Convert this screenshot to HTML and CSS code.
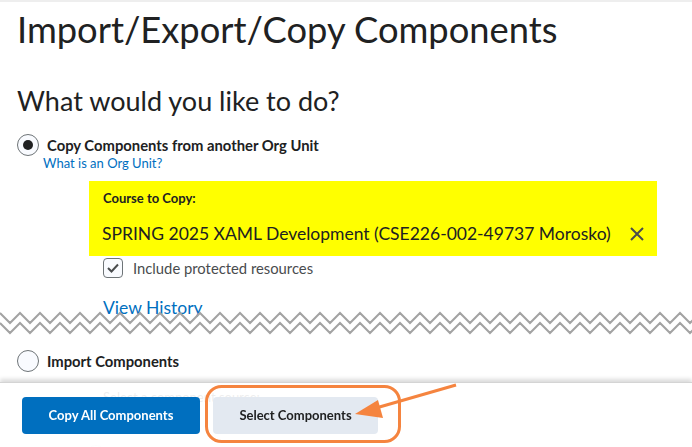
FILE: index.html
```html
<html>
<head>
<title>Import/Export/Copy Components</title>
<link rel="stylesheet" href="styles.css">
</head>
<body>
<div class="topline"></div>
<div id="Content">
  <h1 class="page-title">Import/Export/Copy Components</h1>
  <h2 class="section-title">What would you like to do?</h2>

  <div class="option">
    <span class="radio checked"></span>
    <span class="option-label">Copy Components from another Org Unit</span>
  </div>
  <a class="help-link" href="#">What is an Org Unit?</a>

  <div class="course-box">
    <div class="course-caption">Course to Copy:</div>
    <div class="course-row">
      <span class="course-name">SPRING 2025 XAML Development (CSE226-002-49737 Morosko)</span>
      <svg class="clear-icon" width="14" height="14" viewBox="0 0 14 14"><path d="M1 1 L13 13 M13 1 L1 13" stroke="#494c4e" stroke-width="2" fill="none"/></svg>
    </div>
  </div>

  <div class="check-row">
    <span class="checkbox"><svg width="12" height="10" viewBox="0 0 12 10"><path d="M1 5 L4.5 8.5 L11 1.5" stroke="#494c4e" stroke-width="2" fill="none"/></svg></span>
    <span>Include protected resources</span>
  </div>
  <a class="history-link" href="#">View History</a>

  <!-- torn edge: part of the page is cut out here -->
  <svg class="tear" width="692" height="24" viewBox="0 0 692 24" preserveAspectRatio="none">
    <polyline points="0,0 10,10 20,0 30,10 40,0 50,10 60,0 70,10 80,0 90,10 100,0 110,10 120,0 130,10 140,0 150,10 160,0 170,10 180,0 190,10 200,0 210,10 220,0 230,10 240,0 250,10 260,0 270,10 280,0 290,10 300,0 310,10 320,0 330,10 340,0 350,10 360,0 370,10 380,0 390,10 400,0 410,10 420,0 430,10 440,0 450,10 460,0 470,10 480,0 490,10 500,0 510,10 520,0 530,10 540,0 550,10 560,0 570,10 580,0 590,10 600,0 610,10 620,0 630,10 640,0 650,10 660,0 670,10 680,0 690,10 700,0" transform="translate(0,2)" stroke="#a3a3a3" stroke-width="2" fill="none"/>
    <polyline points="0,0 10,10 20,0 30,10 40,0 50,10 60,0 70,10 80,0 90,10 100,0 110,10 120,0 130,10 140,0 150,10 160,0 170,10 180,0 190,10 200,0 210,10 220,0 230,10 240,0 250,10 260,0 270,10 280,0 290,10 300,0 310,10 320,0 330,10 340,0 350,10 360,0 370,10 380,0 390,10 400,0 410,10 420,0 430,10 440,0 450,10 460,0 470,10 480,0 490,10 500,0 510,10 520,0 530,10 540,0 550,10 560,0 570,10 580,0 590,10 600,0 610,10 620,0 630,10 640,0 650,10 660,0 670,10 680,0 690,10 700,0" transform="translate(0,12)" stroke="#a3a3a3" stroke-width="2" fill="none"/>
  </svg>

  <div class="option import">
    <span class="radio"></span>
    <span class="option-label">Import Components</span>
  </div>
  <div class="source-caption">Select a component source:</div>
  <div class="source-list">
    <span class="radio faint"></span>
  </div>
</div>

<div class="action-bar">
  <button type="button" class="btn primary">Copy All Components</button>
  <button type="button" class="btn secondary">Select Components</button>
</div>

<!-- orange callout drawn over the screenshot -->
<svg class="callout" width="692" height="447" viewBox="0 0 692 447">
  <rect x="206.5" y="386.5" width="193" height="55" rx="15" ry="15" stroke="#f5843f" stroke-width="3" fill="none"/>
  <line x1="456" y1="385" x2="376" y2="408" stroke="#f5843f" stroke-width="3"/>
  <polygon points="355,414 378,400 383,418" fill="#f5843f"/>
</svg>
</body>
</html>
```

FILE: styles.css
```css
body { margin:0; background:#fff; color:#202122; font-family:Lato, "Noto Sans", sans-serif; }
a { color:#006fbf; text-decoration:none; }

.topline { height:2px; background:#eeeeee; }

#Content { padding:0 0 0 17px; }

.page-title { font-size:36.3px; font-weight:400; margin:5px 0 0 0; line-height:44px; color:#202122; }
.section-title { font-size:27px; font-weight:400; margin:34px 0 0 0; line-height:32px; color:#202122; }

.option { display:flex; align-items:center; gap:8px; margin-top:17px; }
.option.import { margin-top:15px; }
.option-label { font-size:14.8px; font-weight:700; color:#202122; }
.radio { width:20px; height:20px; border:1px solid #6e7477; border-radius:50%; background:#f9fbff; display:flex; align-items:center; justify-content:center; }
.radio.checked::after { content:""; width:10px; height:10px; border-radius:50%; background:#202122; }
.radio.faint { border-color:#e6e6e6; background:#fff; }

.help-link { display:block; font-size:13px; margin:0 0 0 26px; line-height:15px; }

.course-box { background:#ffff00; margin:10px 0 0 72px; width:568px; height:75px; box-sizing:border-box; padding:10px 13px 0 14px; }
.course-caption { font-size:13px; font-weight:700; line-height:15px; }
.course-row { display:flex; align-items:center; justify-content:space-between; margin-top:16px; }
.course-name { font-size:17.5px; line-height:24px; color:#202122; margin-left:-1px; }
.clear-icon { flex:none; }

.check-row { display:flex; align-items:center; gap:10px; margin:2px 0 0 86px; font-size:14.8px; color:#494c4e; }
.checkbox { width:18px; height:18px; border:1px solid #6e7477; border-radius:4px; background:#f9fbff; display:flex; align-items:center; justify-content:center; }

.history-link { display:block; font-size:17.5px; line-height:22px; margin:19px 0 0 86px; }

.tear { display:block; margin:-8px 0 0 -17px; }

.source-caption { font-size:13px; color:#494c4e; margin:17px 0 0 86px; }
.source-list { margin:40px 0 0 68px; }

.action-bar { position:fixed; left:0; right:0; bottom:0; height:64px; background:rgba(255,255,255,0.9); box-shadow:0 -3px 4px rgba(0,0,0,0.14); display:flex; align-items:center; gap:13px; padding:0 0 0 22px; border-top:1px solid #d4d4d4; }
.btn { height:37px; border:none; border-radius:4px; font-family:Lato, "Noto Sans", sans-serif; font-size:13px; font-weight:700; }
.primary { width:178px; background:#006fbf; color:#fff; }
.secondary { width:165px; background:#e3e9f1; color:#202122; }

.callout { position:absolute; left:0; top:0; pointer-events:none; }
```
